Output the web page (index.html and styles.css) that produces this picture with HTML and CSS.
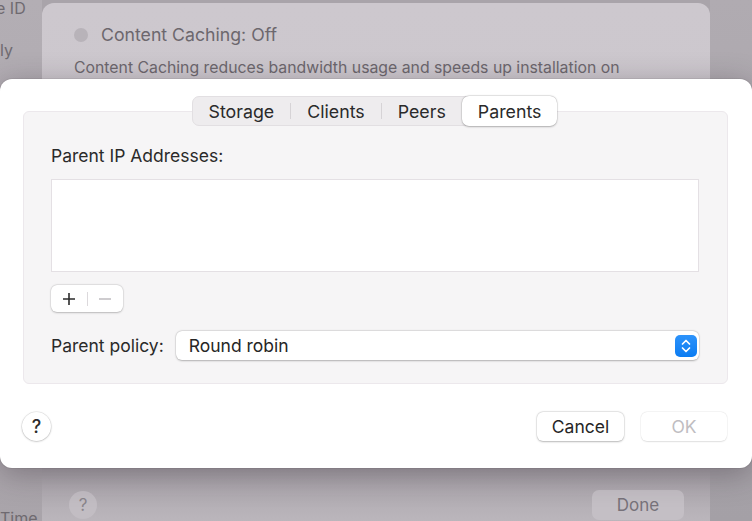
FILE: index.html
```html
<!DOCTYPE html>
<html>
<head>
<meta charset="utf-8">
<link rel="stylesheet" href="styles.css">
</head>
<body>
<div class="backdrop">
  <div class="side">
    <span class="side-a">e ID</span>
    <span class="side-b">ly</span>
    <span class="side-c">Time</span>
  </div>
  <div class="sheet">
    <div class="sheet-status">
      <span class="dot"></span>
      <span class="status-text">Content Caching: Off</span>
    </div>
    <p class="sheet-desc">Content Caching reduces bandwidth usage and speeds up installation on</p>
    <div class="sheet-spacer"></div>
    <div class="sheet-footer">
      <span class="sheet-help">?</span>
      <span class="sheet-done">Done</span>
    </div>
  </div>
  <div class="side-right"></div>
</div>

<div class="dialog">
  <div class="tabs">
    <div class="seg">
      <span class="seg-item">Storage</span>
      <span class="seg-div"></span>
      <span class="seg-item">Clients</span>
      <span class="seg-div"></span>
      <span class="seg-item">Peers</span>
      <span class="seg-item seg-sel">Parents</span>
    </div>
  </div>
  <div class="group">
    <div class="label">Parent IP Addresses:</div>
    <div class="list"></div>
    <div class="pm">
      <span class="pm-btn pm-plus">
        <svg width="14" height="14" viewBox="0 0 14 14"><path d="M7 1v12M1 7h12" stroke="#2b2b2b" stroke-width="1.6" fill="none"/></svg>
      </span>
      <span class="pm-div"></span>
      <span class="pm-btn pm-minus">
        <svg width="14" height="14" viewBox="0 0 14 14"><path d="M1 7h12" stroke="#b9b6ba" stroke-width="1.4" fill="none"/></svg>
      </span>
    </div>
    <div class="policy">
      <span class="policy-label">Parent policy:</span>
      <div class="popup">
        <span class="popup-text">Round robin</span>
        <span class="stepper">
          <svg width="12" height="16" viewBox="0 0 12 16"><path d="M2.5 6L6 2.5L9.5 6M2.5 10L6 13.5L9.5 10" stroke="#fff" stroke-width="1.7" fill="none" stroke-linecap="round" stroke-linejoin="round"/></svg>
        </span>
      </div>
    </div>
  </div>
  <div class="footer">
    <span class="help">?</span>
    <div class="buttons">
      <span class="btn">Cancel</span>
      <span class="btn btn-off">OK</span>
    </div>
  </div>
</div>
</body>
</html>
```

FILE: styles.css
```css
html, body {
  margin: 0;
  padding: 0;
}
body {
  width: 752px;
  height: 521px;
  overflow: hidden;
  position: relative;
  background: #a9a4aa;
  font-family: Inter, "Liberation Sans", sans-serif;
  color: #262626;
}
.backdrop {
  display: flex;
  height: 521px;
}
.side {
  width: 42px;
  flex: none;
  display: flex;
  flex-direction: column;
  color: #6f6a70;
  font-size: 16px;
  background: linear-gradient(#b3aeb4, #a9a4aa);
}
.side-a { margin-top: -2px; margin-left: -4px; }
.side-b { margin-top: 22px; margin-left: 0; }
.side-c { margin-top: auto; margin-bottom: -7px; margin-left: 0; }
.sheet {
  width: 668px;
  flex: none;
  margin-top: 3px;
  height: 540px;
  border-radius: 12px;
  background: linear-gradient(#cdc8ce 0%, #cbc6cc 55%, #a7a2a8 86%, #c3bec4 100%);
  display: flex;
  flex-direction: column;
  padding: 0 32px;
  box-sizing: border-box;
  color: #6f6a70;
}
.side-right {
  flex: 1;
  background: linear-gradient(#b0abb1, #a4a0a6);
}
.sheet-status {
  display: flex;
  align-items: center;
  gap: 13px;
  margin-top: 21px;
}
.dot {
  width: 14px;
  height: 14px;
  border-radius: 50%;
  background: #b8b3b9;
  margin-left: 0;
}
.status-text {
  font-size: 17.7px;
  color: #6c676d;
}
.sheet-desc {
  margin: 13px 0 0 0;
  font-size: 15.8px;
  color: #6c676d;
  letter-spacing: 0;
}
.sheet-spacer { flex: 1; }
.sheet-footer {
  display: flex;
  align-items: center;
  justify-content: space-between;
  margin-bottom: 23px;
}
.sheet-help {
  width: 28px;
  height: 28px;
  border-radius: 50%;
  background: #c2bdc3;
  display: flex;
  align-items: center;
  justify-content: center;
  font-size: 17px;
  color: #8a858b;
  margin-left: -5px;
}
.sheet-done {
  width: 92px;
  height: 30px;
  border-radius: 7px;
  background: #c4bfc5;
  display: flex;
  align-items: center;
  justify-content: center;
  font-size: 17px;
  color: #77727a;
  margin-right: -6px;
}

.dialog {
  position: absolute;
  left: 0;
  top: 79px;
  width: 752px;
  height: 389px;
  background: #ffffff;
  border-radius: 12px;
  box-shadow: 0 6px 30px rgba(40, 30, 40, 0.35), 0 0 0 1px rgba(0,0,0,0.06);
  padding-top: 17px;
  box-sizing: border-box;
  display: flex;
  flex-direction: column;
}
.tabs {
  display: flex;
  justify-content: center;
  position: relative;
  z-index: 1;
}
.seg {
  display: flex;
  align-items: center;
  height: 30px;
  box-sizing: border-box;
  background: #eeecee;
  border: 1px solid #e2dfe2;
  border-radius: 7px;
  margin-left: -3px;
}
.seg-item {
  height: 28px;
  display: flex;
  align-items: center;
  padding: 0 16px;
  font-size: 17.8px;
  color: #2a2a2a;
  letter-spacing: 0;
}
.seg-div {
  width: 1px;
  height: 16px;
  background: #d6d3d6;
}
.seg-sel {
  background: #ffffff;
  border-radius: 7px;
  box-shadow: 0 0.5px 2px rgba(0,0,0,0.25), 0 0 0 0.5px rgba(0,0,0,0.1);
  height: 30px;
  margin: -1px -1px -1px 0;
}
.group {
  margin: -15px 24px 0 23px;
  background: #f6f5f6;
  border: 1px solid #ece8ec;
  border-radius: 6px;
  padding: 34px 28px 23px 27px;
  display: flex;
  flex-direction: column;
}
.label {
  font-size: 17.5px;
  color: #2a2a2a;
  line-height: 20px;
}
.list {
  margin-top: 13px;
  height: 93px;
  background: #ffffff;
  border: 1px solid #e4e0e4;
  box-sizing: border-box;
}
.pm {
  margin-top: 13px;
  width: 72px;
  height: 27px;
  box-sizing: border-box;
  background: #ffffff;
  border-radius: 6px;
  box-shadow: 0 0.5px 2px rgba(0,0,0,0.22), 0 0 0 0.5px rgba(0,0,0,0.08);
  display: flex;
  align-items: center;
}
.pm-btn {
  flex: 1;
  display: flex;
  align-items: center;
  justify-content: center;
}
.pm-div {
  width: 1px;
  height: 14px;
  background: #dcd9dc;
}
.policy {
  margin-top: 19px;
  display: flex;
  align-items: center;
  gap: 12px;
}
.policy-label {
  font-size: 17.5px;
  color: #2a2a2a;
}
.popup {
  flex: 1;
  height: 29px;
  background: #ffffff;
  border-radius: 6px;
  box-shadow: 0 0.5px 2px rgba(0,0,0,0.25), 0 0 0 0.5px rgba(0,0,0,0.08);
  display: flex;
  align-items: center;
  justify-content: space-between;
  padding: 0 2px 0 13px;
}
.popup-text {
  font-size: 17.5px;
  color: #262626;
}
.stepper {
  width: 22px;
  height: 22px;
  border-radius: 5px;
  background: linear-gradient(#2d93fb, #0b7cf2);
  display: flex;
  align-items: center;
  justify-content: center;
}
.footer {
  margin-top: 28px;
  display: flex;
  align-items: center;
  justify-content: space-between;
  padding: 0 25px 0 22px;
}
.help {
  width: 29px;
  height: 29px;
  box-sizing: border-box;
  border-radius: 50%;
  background: #ffffff;
  box-shadow: 0 0.5px 2px rgba(0,0,0,0.28), 0 0 0 0.5px rgba(0,0,0,0.08);
  display: flex;
  align-items: center;
  justify-content: center;
  font-size: 18px;
  font-weight: 500;
  color: #2a2a2a;
}
.buttons {
  display: flex;
  gap: 17px;
  margin-top: -1px;
}
.btn {
  width: 87px;
  height: 29px;
  border-radius: 6px;
  background: #ffffff;
  box-shadow: 0 0.5px 2px rgba(0,0,0,0.25), 0 0 0 0.5px rgba(0,0,0,0.08);
  display: flex;
  align-items: center;
  justify-content: center;
  font-size: 17.5px;
  color: #262626;
}
.btn-off {
  width: 86px;
  color: #c0bdc1;
  box-shadow: 0 0.5px 1.5px rgba(0,0,0,0.1), 0 0 0 0.5px rgba(0,0,0,0.05);
}
```
